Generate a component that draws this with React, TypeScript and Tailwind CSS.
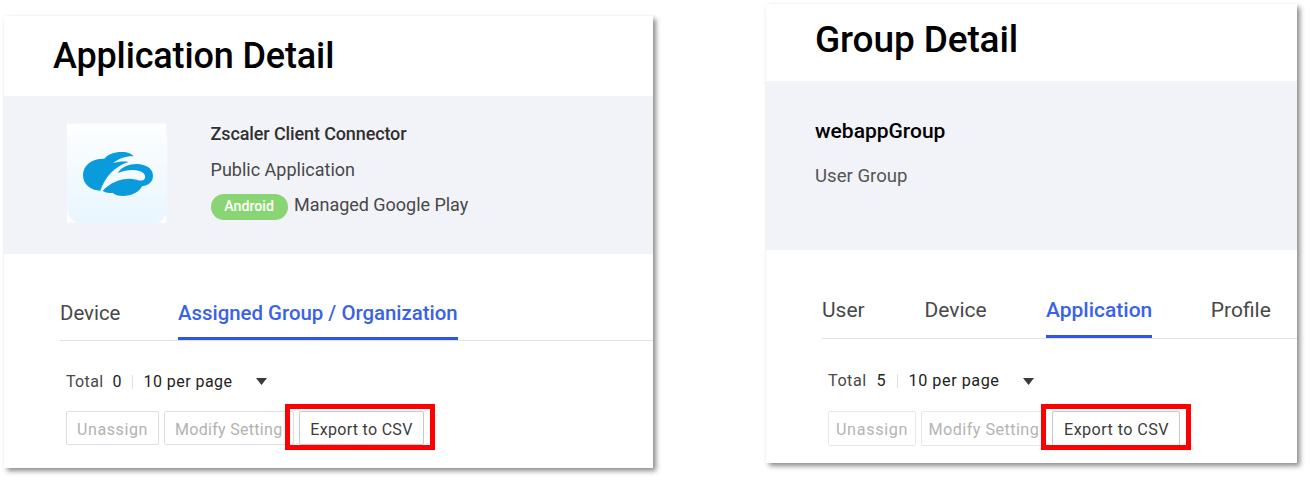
import type { ReactNode } from "react";

function ZscalerLogo() {
  return (
    <svg viewBox="51 42 300 300" className="h-[100px] w-[100px] overflow-visible">
      <defs>
        <linearGradient id="tile" x1="0" y1="0" x2="0" y2="1">
          <stop offset="0" stopColor="#fdfeff" />
          <stop offset="1" stopColor="#e8f6fe" />
        </linearGradient>
      </defs>
      <rect x="51" y="41" width="298" height="297" fill="#fefefe" />
      <rect x="51" y="41" width="301" height="301" rx="48" fill="url(#tile)" />
      <path
        fill="#0a9bdc"
        d="M151 242C122 242 99 223 99 196C99 167 124 145 163 146C177 130 198 126 215 126C234 126 247 132 250 139C226 138 206 146 190 159C204 155 219 153 236 156C194 168 163 204 151 242Z"
      />
      <path
        fill="#0a9bdc"
        d="M203 189C214 171 237 162 260 162C289 162 309 177 309 197C309 214 297 226 277 228C267 247 244 258 219 258C205 258 194 254 187 248C177 250 166 248 158 242C180 219 207 206 240 206C260 207 271 214 278 211C286 208 288 199 282 191C269 177 233 177 203 189Z"
      />
    </svg>
  );
}

function Panel({ className, children }: { className: string; children: ReactNode }) {
  return (
    <section
      className={`flex flex-none flex-col bg-white text-[#484848] shadow-[3px_3px_5px_rgba(0,0,0,0.45),0_0_1px_rgba(0,0,0,0.04)] ${className}`}
    >
      {children}
    </section>
  );
}

function Highlight({ className }: { className: string }) {
  return <span className={`pointer-events-none absolute h-[46px] w-[150px] border-5 border-[#ff0000] ${className}`} />;
}

function Caret() {
  return (
    <svg viewBox="0 0 11 7" className="h-[7px] w-[11px]">
      <path d="M0 0H11L5.5 7Z" fill="#3a3a3a" />
    </svg>
  );
}

function ApplicationDetail() {
  return (
    <Panel className="mt-4 ml-1 h-[452px] w-[649px]">
      <h1 className="flex h-20 items-center pl-[49px] text-[36px] font-medium tracking-[-0.14px] text-black">Application Detail</h1>
      <div className="flex h-[158px] bg-[#f2f3f8] pt-5 pl-[63px]">
        <div className="mt-2 mr-[43.6px]">
          <ZscalerLogo />
        </div>
        <div className="text-[18px] leading-[35.5px]">
          <div className="tracking-[-0.12px] font-medium text-[#303030]">Zscaler Client Connector</div>
          <div>Public Application</div>
          <div className="flex items-center">
            <span className="mt-1 mr-[6.5px] flex h-[26px] w-[77px] items-center justify-center rounded-full bg-[#8ad573] text-[14.2px] font-medium text-white">
              Android
            </span>
            <span className="tracking-[-0.03px]">Managed Google Play</span>
          </div>
        </div>
      </div>
      <nav className="mt-8 ml-14 flex h-[55px] border-b border-[#dfe1ea] text-[20.4px]">
        <a className="flex h-[54px] w-[118px] items-center">Device</a>
        <a className="flex h-[54px] items-center border-b-3 border-[#2f55e3] pt-[3px] font-medium text-[#3a62e6]">
          Assigned Group / Organization
        </a>
      </nav>
      <div className="mt-[28.5px] ml-[62px] flex h-6 items-center text-[16px]">
        <span className="w-[46.5px] tracking-[0.35px]">Total</span>
        <span className="w-[19px] text-[#222]">0</span>
        <span className="mr-[11px] h-[14px] w-px bg-[#ecd9e2]" />
        <span className="w-[112.5px] tracking-[0.45px] text-[#222]">10 per page</span>
        <Caret />
      </div>
      <div className="relative mt-[17.5px] ml-[62px] flex h-[34px] text-[16px]">
        <button className="mr-[5px] w-[93px] rounded-[2px] border border-[#dcdde9] pt-[3px] tracking-[0.6px] text-[#b2b2b2]">Unassign</button>
        <button className="mr-[5px] w-[130px] rounded-[2px] border border-[#dcdde9] pt-[3px] pl-[10px] text-left tracking-[0.3px] text-[#b2b2b2]">
          Modify Setting
        </button>
        <button className="w-[125px] rounded-[2px] border border-[#c5c8d4] pt-[3px] tracking-[0.3px] text-[#3c3c3c]">Export to CSV</button>
        <Highlight className="-top-[7px] left-[219px]" />
      </div>
    </Panel>
  );
}

function GroupDetail() {
  return (
    <Panel className="mt-1 ml-[113px] h-[459px] w-[531px]">
      <h1 className="flex h-[76.5px] items-center pb-[6px] pl-[49px] text-[37px] font-medium tracking-[-0.12px] text-black">Group Detail</h1>
      <div className="h-[169px] bg-[#f2f3f8] pt-7 pl-[49px] leading-[45px]">
        <div className="text-[21px] font-medium text-black">webappGroup</div>
        <div className="text-[18.6px] text-[#555]">User Group</div>
      </div>
      <nav className="mt-8 ml-14 flex h-[57px] border-b border-[#dfe1ea] text-[21px]">
        <a className="flex h-14 w-[102.5px] items-center pt-[2px]">User</a>
        <a className="flex h-14 w-[121.5px] items-center pt-[2px]">Device</a>
        <a className="mr-[58.5px] flex h-14 items-center border-b-3 border-[#2f55e3] pt-[5px] font-medium text-[#3a62e6]">Application</a>
        <a className="flex h-14 items-center pt-[2px]">Profile</a>
      </nav>
      <div className="mt-[30.5px] ml-[62px] flex h-6 items-center text-[16.2px]">
        <span className="w-[48.5px] pt-px tracking-[0.5px]">Total</span>
        <span className="w-[20px] pt-px text-[#222]">5</span>
        <span className="mr-[11px] h-[14px] w-px bg-[#ecd9e2]" />
        <span className="w-[114.5px] pt-px tracking-[0.55px] text-[#222]">10 per page</span>
        <Caret />
      </div>
      <div className="relative mt-[17.5px] ml-[62px] flex h-[35px] text-[16.2px]">
        <button className="mr-[5px] w-[88px] rounded-[2px] border border-[#e8e8ec] pt-[5px] tracking-[0.65px] text-[#b4b4b4]">Unassign</button>
        <button className="mr-[6px] w-[125px] rounded-[2px] border border-[#e8e8ec] pt-[5px] pl-[6.5px] text-left tracking-[0.45px] text-[#b4b4b4]">
          Modify Setting
        </button>
        <button className="w-[128px] rounded-[2px] border border-[#c5c8d4] pt-[5px] pl-px tracking-[0.4px] text-[#3c3c3c]">Export to CSV</button>
        <Highlight className="-top-[7px] left-[213px]" />
      </div>
    </Panel>
  );
}

export default function App() {
  return (
    <main className="flex h-[481px] w-[1310px] items-start overflow-hidden bg-white font-['Roboto',sans-serif] whitespace-nowrap">
      <ApplicationDetail />
      <GroupDetail />
    </main>
  );
}
